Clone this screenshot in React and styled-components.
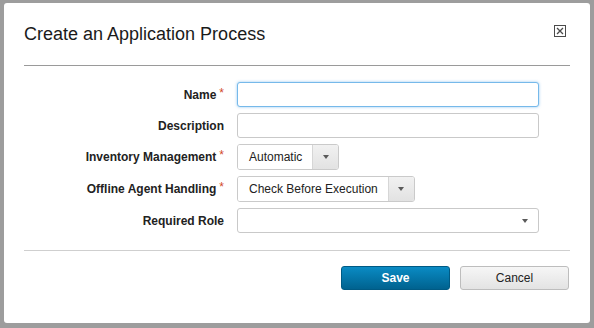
import React from "react";
import styled, { createGlobalStyle } from "styled-components";

const Global = createGlobalStyle`
  html, body { margin: 0; padding: 0; }
  body {
    background: #9d9d9d;
    font-family: "Liberation Sans", Arial, sans-serif;
    width: 594px;
    height: 328px;
    overflow: hidden;
  }
  * { box-sizing: border-box; }
`;

const Dialog = styled.div`
  margin: 3px 0 0 4px;
  width: 586px;
  height: 320px;
  background: #fff;
  border-radius: 3px;
  padding: 0 20px;
`;

const Header = styled.div`
  display: flex;
  justify-content: space-between;
  align-items: flex-start;
  padding: 20px 0 20px;
  border-bottom: 1px solid #9a9a9a;
`;

const Title = styled.h1`
  margin: 0;
  font-size: 18px;
  line-height: 22px;
  font-weight: normal;
  color: #1a1a1a;
`;

const CloseButton = styled.button`
  border: 0;
  background: none;
  padding: 0;
  margin: 2px 4px 0 0;
  width: 12px;
  height: 12px;
  display: block;
  cursor: pointer;
  svg { display: block; }
`;

const Form = styled.div`
  display: grid;
  grid-template-columns: 200px 302px;
  grid-template-rows: 25px 25px 26px 26px 25px;
  column-gap: 13px;
  row-gap: 6px;
  padding: 16px 0 17px;
  border-bottom: 1px solid #cfcfcf;
`;

const Label = styled.label`
  display: flex;
  justify-content: flex-end;
  align-items: center;
  font-size: 12px;
  font-weight: bold;
  color: #222;
  white-space: nowrap;
`;

const Required = styled.span`
  color: #d2492a;
  font-weight: normal;
  margin-left: 3px;
  font-size: 12px;
  position: relative;
  top: -2px;
`;

const TextInput = styled.input`
  width: 100%;
  height: 25px;
  border: 1px solid ${p => (p.$focused ? "#76b9ea" : "#c9c9c9")};
  border-radius: 3px;
  box-shadow: ${p => (p.$focused ? "0 0 3px rgba(102,175,233,0.7)" : "none")};
  outline: none;
  padding: 0 8px;
  font-family: inherit;
  font-size: 12px;
`;

const SplitSelect = styled.div`
  display: inline-flex;
  justify-self: start;
  height: 26px;
  border: 1px solid #cacaca;
  border-radius: 3px;
  overflow: hidden;
  font-size: 12px;
  color: #222;
`;

const SplitValue = styled.div`
  display: flex;
  align-items: center;
  padding: 0 ${p => p.$pad}px 0 11px;
  background: #fff;
  border-right: 1px solid #d6d6d6;
`;

const SplitToggle = styled.div`
  width: 25px;
  display: flex;
  align-items: center;
  justify-content: center;
  background: linear-gradient(#f1f1f1, #e2e2e2);
`;

const Caret = styled.span`
  width: 0;
  height: 0;
  border-left: 3.5px solid transparent;
  border-right: 3.5px solid transparent;
  border-top: 4px solid #5a5a5a;
`;

const ComboSelect = styled.div`
  display: flex;
  align-items: center;
  justify-content: flex-end;
  height: 25px;
  border: 1px solid #c9c9c9;
  border-radius: 3px;
  padding-right: 10px;
  background: #fff;
`;

const Footer = styled.div`
  display: flex;
  justify-content: flex-end;
  gap: 10px;
  padding: 15px 1px 0 0;
`;

const Button = styled.button`
  width: 109px;
  height: 24px;
  border-radius: 3px;
  font-family: inherit;
  font-size: 12px;
  padding: 0;
  cursor: pointer;
  ${p =>
    p.$primary
      ? `
    background: linear-gradient(#0a8bc4, #00628f);
    border: 1px solid #005a84;
    color: #fff;
    font-weight: bold;
  `
      : `
    background: linear-gradient(#f6f6f6, #e3e3e3);
    border: 1px solid #bdbdbd;
    color: #222;
    font-weight: normal;
  `}
`;

export default function App() {
  return (
    <>
      <Global />
      <Dialog>
        <Header>
          <Title>Create an Application Process</Title>
          <CloseButton aria-label="Close">
            <svg width="12" height="12" viewBox="0 0 12 12">
              <rect x="0.5" y="0.5" width="11" height="11" fill="none" stroke="#4a4a4a" />
              <path d="M3 3 L9 9 M9 3 L3 9" stroke="#4a4a4a" strokeWidth="1.3" />
            </svg>
          </CloseButton>
        </Header>
        <Form>
          <Label>Name<Required>*</Required></Label>
          <TextInput $focused />
          <Label>Description</Label>
          <TextInput />
          <Label>Inventory Management<Required>*</Required></Label>
          <SplitSelect>
            <SplitValue $pad={10}>Automatic</SplitValue>
            <SplitToggle><Caret /></SplitToggle>
          </SplitSelect>
          <Label>Offline Agent Handling<Required>*</Required></Label>
          <SplitSelect>
            <SplitValue $pad={10}>Check Before Execution</SplitValue>
            <SplitToggle><Caret /></SplitToggle>
          </SplitSelect>
          <Label>Required Role</Label>
          <ComboSelect><Caret /></ComboSelect>
        </Form>
        <Footer>
          <Button $primary>Save</Button>
          <Button>Cancel</Button>
        </Footer>
      </Dialog>
    </>
  );
}
